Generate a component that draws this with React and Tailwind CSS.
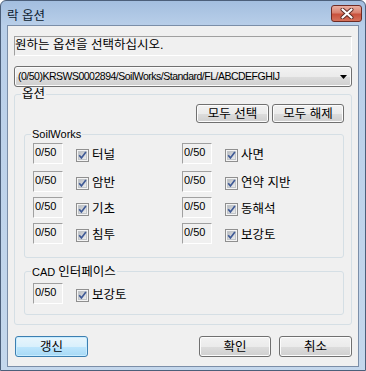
import React from "react";

const sunken = "border border-t-[#a0a0a0] border-l-[#a0a0a0] border-r-white border-b-white";
const btn =
  "rounded-[3px] border border-[#707070] bg-[linear-gradient(to_bottom,#f2f2f2_0%,#ebebeb_50%,#dddddd_50%,#cfcfcf_100%)] shadow-[inset_0_0_0_1px_#fcfcfc] flex items-center justify-center text-[12.5px] leading-[14px]";

function Check() {
  return (
    <svg width="13" height="13" viewBox="0 0 13 13" className="shrink-0">
      <defs>
        <linearGradient id="cbg" x1="0" y1="0" x2="1" y2="1">
          <stop offset="0" stopColor="#b6babf" />
          <stop offset="1" stopColor="#f0f0f0" />
        </linearGradient>
      </defs>
      <rect x="0.5" y="0.5" width="12" height="12" fill="#f4f4f4" stroke="#8f8f8f" />
      <rect x="2.5" y="2.5" width="8" height="8" fill="url(#cbg)" stroke="#c2c6ca" />
      <path d="M3.2 6.3 L5.4 8.9 L9.9 2.9" fill="none" stroke="#3f5a96" strokeWidth="1.7" />
    </svg>
  );
}

function Edit() {
  return (
    <div className={`w-[30px] h-[21px] ${sunken} text-[11px] leading-[13px] pl-[1px] pt-[2px] shrink-0`}>0/50</div>
  );
}

function Item({ label }) {
  return (
    <div className="flex items-start">
      <Edit />
      <div className="ml-[13px] mt-[6px] flex items-center">
        <Check />
        <span className="ml-[3px] text-[12.5px] leading-[13px]">{label}</span>
      </div>
    </div>
  );
}

function Row({ a, b, cls }) {
  return (
    <div className={`grid grid-cols-[149px_1fr] h-[21px] ${cls}`}>
      <Item label={a} />
      <Item label={b} />
    </div>
  );
}

export default function App() {
  return (
    <div className="w-[366px] h-[371px] font-['Liberation_Sans','Noto_Sans_CJK_KR',sans-serif] text-black">
      <div className="w-[366px] h-[371px] flex flex-col border border-[#4c5f7a] rounded-t-[6px] bg-[linear-gradient(to_bottom,#a3bedf_0px,#b9cfe9_25px,#c4d7ec_100%)] px-[6px] pb-[3px]">
        {/* title bar */}
        <div className="-mx-[6px] h-[24px] flex items-start pl-[6px] pr-[3px] shrink-0">
          <span className="mt-[8px] text-[12.5px] leading-[14px] text-[#0b1a2e]">락 옵션</span>
          <div className="ml-auto mt-[4px] w-[31px] h-[17px] rounded-[3px] border border-[#6e2b24] bg-[linear-gradient(to_bottom,#eab0a2_0%,#d98270_45%,#c9513c_55%,#d5725c_100%)] flex items-center justify-center">
            <svg width="14" height="11" viewBox="0 0 14 11">
              <path d="M2.5 1.5 L11.5 9.5 M11.5 1.5 L2.5 9.5" stroke="#5a2a24" strokeWidth="4" strokeLinecap="round" />
              <path d="M2.5 1.5 L11.5 9.5 M11.5 1.5 L2.5 9.5" stroke="#ffffff" strokeWidth="2.2" strokeLinecap="round" />
            </svg>
          </div>
        </div>

        {/* client */}
        <div className="flex-1 border border-[#7b8ea8] bg-[#f0f0f0] px-[6px] flex flex-col">
          <div className={`mt-[10px] h-[20px] ${sunken} text-[12.5px] leading-[14px] pt-[1px]`}>
            원하는 옵션을 선택하십시오.
          </div>

          <div className="mt-[10px] h-[21px] rounded-[3px] border border-[#707070] bg-[linear-gradient(to_bottom,#f2f2f2_0%,#ebebeb_50%,#dddddd_50%,#cfcfcf_100%)] shadow-[inset_0_0_0_1px_#fbfbfb] flex items-center pl-[3px] pr-[4px]">
            <span className="text-[10.5px] leading-[13px] tracking-[-0.5px]">(0/50)KRSWS0002894/SoilWorks/Standard/FL/ABCDEFGHIJ</span>
            <svg width="7" height="4" viewBox="0 0 7 4" className="ml-auto">
              <polygon points="0,0 7,0 3.5,4" fill="#000" />
            </svg>
          </div>

          <fieldset className="mt-[1px] border border-[#d5dfe5] rounded-[3px]">
            <legend className="ml-[6px] px-[1px] text-[12.5px] leading-[12px] bg-[#f0f0f0]">옵션</legend>
            <div className="pl-[9px] pr-[7px] pt-[4px] pb-[9px] flex flex-col">
              <div className="flex justify-end gap-[3px]">
                <div className={`${btn} w-[73px] h-[19px]`}>모두 선택</div>
                <div className={`${btn} w-[72px] h-[19px]`}>모두 해제</div>
              </div>

              <fieldset className="mt-[5px] border border-[#d5dfe5] rounded-[3px]">
                <legend className="ml-[6px] px-[1px] text-[11px] leading-[12px] bg-[#f0f0f0]">SoilWorks</legend>
                <div className="pl-[8px] pt-[3px] pb-[13px] flex flex-col">
                  <Row a="터널" b="사면" cls="" />
                  <Row a="암반" b="연약 지반" cls="mt-[7px]" />
                  <Row a="기초" b="동해석" cls="mt-[5px]" />
                  <Row a="침투" b="보강토" cls="mt-[5px]" />
                </div>
              </fieldset>

              <fieldset className="mt-[7px] border border-[#d5dfe5] rounded-[3px]">
                <legend className="ml-[6px] px-[1px] leading-[12px] bg-[#f0f0f0]">
                  <span className="text-[11px]">CAD </span>
                  <span className="text-[12.5px]">인터페이스</span>
                </legend>
                <div className="pl-[8px] pt-[5px] pb-[10px] flex flex-col">
                  <div className="h-[21px]">
                    <Item label="보강토" />
                  </div>
                </div>
              </fieldset>
            </div>
          </fieldset>

          <div className="mt-[11px] flex">
            <div className="ml-[1px] w-[73px] h-[21px] rounded-[3px] border border-[#3c7fb1] bg-[linear-gradient(to_bottom,#e8f5fc_0%,#d9f0fc_50%,#bee6fd_50%,#a7d9f5_100%)] shadow-[inset_0_0_0_1px_#c8ecff] flex items-center justify-center text-[12.5px] leading-[14px]">
              갱신
            </div>
            <div className={`${btn} ml-auto w-[72px] h-[21px]`}>확인</div>
            <div className={`${btn} ml-[8px] w-[73px] h-[21px]`}>취소</div>
          </div>
        </div>
      </div>
    </div>
  );
}
